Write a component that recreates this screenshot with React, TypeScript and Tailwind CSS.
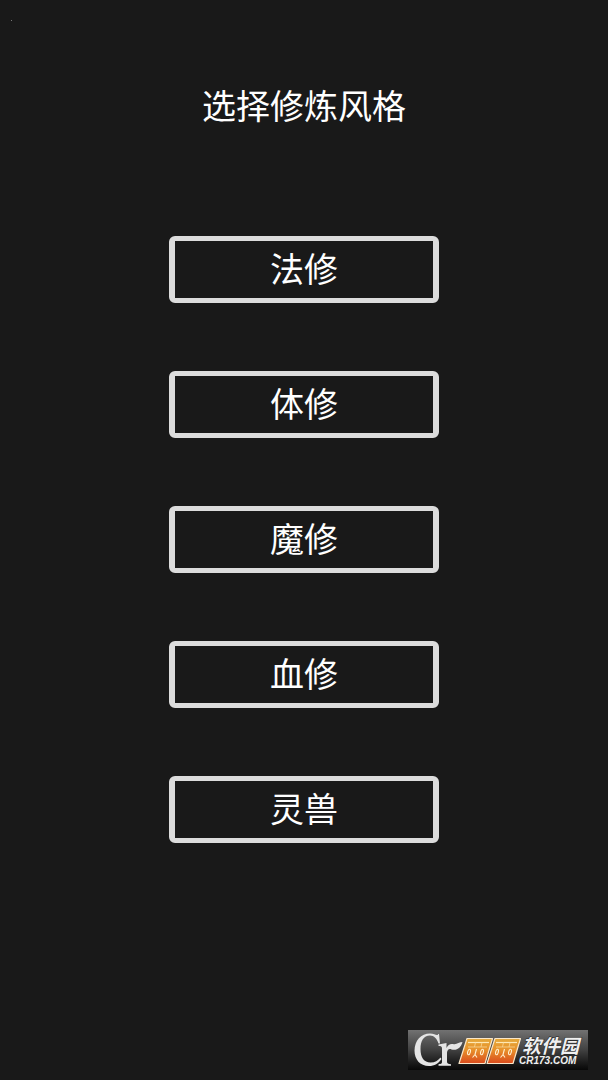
const styles: string[] = ['法修', '体修', '魔修', '血修', '灵兽'];

function SiteLogo() {
  return (
    <a
      href="#site"
      aria-label="西西软件园 CR173.COM"
      className="absolute right-5 bottom-2.5 block h-10 w-45 bg-linear-to-b from-[#727272] via-[#414141] to-[#080808]"
    >
      <svg viewBox="0 0 180 40" className="block h-full w-full" aria-hidden="true">
        <defs>
          <linearGradient id="tile" x1="0" y1="0" x2="0" y2="1">
            <stop offset="0" stopColor="#e5a93a" />
            <stop offset="0.45" stopColor="#e8922c" />
            <stop offset="1" stopColor="#d94a1c" />
          </linearGradient>
        </defs>
        <g fill="#e4e4e4">
          <path d="M31 4 L32 13.500 L30.500 13.500 C29 8.500 26 5.500 22 5.500 C15.500 5.500 12.500 11 12.500 19 C12.500 27.500 16 32.500 22.500 32.500 C27 32.500 30 30.500 32.500 27.500 L33.500 29 C30.500 33.500 26.500 36 21 36 C12 36 6.500 29.500 6.500 20.500 C6.500 10.500 13 3.500 22 3.500 C25.500 3.500 27.500 5 29 5 C29.800 5 30 4.500 30.300 4 Z" />
          <path d="M30.500 14.500 L38.500 13 L38.500 18 C40 15 42 13.500 45 14 C48.500 15 51 12 54.500 12 C53 17.500 49 21 43.500 19.500 C41 18 39 20 39 23 L39 31.500 C39 33.500 40 33.800 43 34.200 L43 35.800 L30.500 35.800 L30.500 34.200 C33.500 33.800 34 33.500 34 31.500 L34 18.500 C34 16.500 33 16 30.500 16 Z" />
        </g>
        {[0, 28].map((x) => (
          <g key={x} transform={`translate(${x} 0)`}>
            <path
              d="M59 8.500 L84.500 8.500 L77 33.500 L51 33.500 Z"
              fill="url(#tile)"
              stroke="#f9e6c8"
              strokeWidth="1.2"
              strokeLinejoin="round"
            />
            <path d="M60 12.500 H81" stroke="#ffe8b4" strokeWidth="1.200" />
            <path
              d="M67.500 12.500 L66.500 17 M74 12.500 L73 17 M60 17 H79"
              fill="none"
              stroke="#f9d898"
              strokeWidth="0.8"
            />
            <g fill="none" stroke="#fff0d0" strokeWidth="1.1">
              <ellipse cx="61" cy="22" rx="1.300" ry="2.800" transform="rotate(15 61 22)" />
              <ellipse cx="74" cy="22" rx="1.300" ry="2.800" transform="rotate(15 74 22)" />
              <path d="M68.500 19 L67 24.500 M67 24.500 L64.500 27.500 M67 24.500 L69 27.500" />
            </g>
          </g>
        ))}
        <g fill="#f0f0f0" stroke="#252525" strokeWidth="1" paintOrder="stroke" fontStyle="italic" fontWeight="700">
          <text x="114" y="23" fontSize="19" fontFamily="'Noto Sans CJK SC', sans-serif">
            软件园
          </text>
          <text x="111" y="34" fontSize="10" fontFamily="'Liberation Sans', sans-serif">
            CR173.COM
          </text>
        </g>
      </svg>
    </a>
  );
}

export default function App() {
  return (
    <main className="relative flex min-h-screen flex-col items-center bg-[#191919] pt-20 font-['Noto_Sans_CJK_SC',sans-serif] text-[34px] leading-[50px] text-white">
      <span className="absolute top-5 left-[11px] size-px bg-[#777777]" />
      <h1>选择修炼风格</h1>
      <div className="mt-[106px] flex w-[270px] flex-col gap-[68px]">
        {styles.map((name) => (
          <button
            key={name}
            type="button"
            className="flex h-[67px] items-center justify-center rounded-md border-x-6 border-y-5 border-[#dcdcdc] pb-1"
          >
            {name}
          </button>
        ))}
      </div>
      <SiteLogo />
    </main>
  );
}
